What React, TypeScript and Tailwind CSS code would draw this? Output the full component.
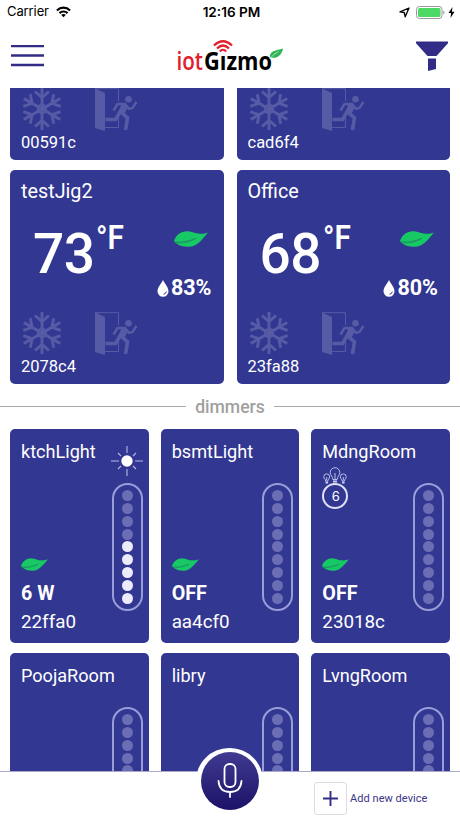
import React from 'react';

interface Thermostat {
  name: string;
  id: string;
  temp: number;
  humidity: number;
}

interface Dimmer {
  name: string;
  id?: string;
  status?: string;
  level: number;
  sun?: boolean;
  bulbs?: number;
}

const thermostats: Thermostat[] = [
  { name: 'testJig2', id: '2078c4', temp: 73, humidity: 83 },
  { name: 'Office', id: '23fa88', temp: 68, humidity: 80 },
];

const dimmers: Dimmer[] = [
  { name: 'ktchLight', id: '22ffa0', status: '6 W', level: 5, sun: true },
  { name: 'bsmtLight', id: 'aa4cf0', status: 'OFF', level: 0 },
  { name: 'MdngRoom', id: '23018c', status: 'OFF', level: 0, bulbs: 6 },
];

const moreDimmers: Dimmer[] = [
  { name: 'PoojaRoom', level: 0 },
  { name: 'libry', level: 0 },
  { name: 'LvngRoom', level: 0 },
];

function Leaf({ className }: { className: string }) {
  return (
    <svg viewBox="0 0 34 16" className={className} fill="none">
      <path d="M0 10C2 4 7 0 14 .3c4 .2 7 2.300 11.500 2.500 3.500.1 6-.3 8.500-1.300C30 6 26.500 11.500 21 14.200c-5.500 2.600-14 1.800-18.500-1.700C1.500 11.700.5 11 0 10z" fill="#17c964" />
      <path d="M.5 10.800c7 .8 14-.5 21-3.300-6 3.700-13 5-19.500 4.300" stroke="#1f7a64" strokeWidth=".6" />
    </svg>
  );
}

function Snowflake() {
  return (
    <svg viewBox="-20 -21 40 42" className="h-[42px] w-10" stroke="#fff" strokeWidth="2.900" fill="none" opacity=".18">
      <path
        d={[0, 60, 120, 180, 240, 300]
          .map((deg) => {
            const a = (deg * Math.PI) / 180;
            const pt = (x: number, y: number) =>
              `${(x * Math.cos(a) - y * Math.sin(a)).toFixed(2)} ${(x * Math.sin(a) + y * Math.cos(a)).toFixed(2)}`;
            return `M0 0L${pt(0, -21)}M${pt(-7, -17.5)}L${pt(0, -11.5)}L${pt(7, -17.5)}`;
          })
          .join('')}
      />
      <path d="M0-5L4.300-2.500V2.500L0 5-4.300 2.500V-2.500z" strokeWidth="1.500" />
    </svg>
  );
}

function ExitDoor() {
  return (
    <svg viewBox="0 0 43 43" className="h-[43px] w-[43px]" fill="none" opacity=".18">
      <path d="M0 .5L10 5V43L0 40z" fill="#fff" />
      <path d="M0 .7H23.500V13M23.500 30V39.500H10" stroke="#fff" strokeWidth="1" />
      <circle cx="33.500" cy="11.300" r="3.300" fill="#fff" />
      <path d="M18.500 22.500L22.500 16H30L34 21 37.500 20 41.500 14" stroke="#fff" strokeWidth="2.400" />
      <path d="M27.500 16.500L32 18.500 28.500 25.500 24 24.500z" fill="#fff" stroke="#fff" strokeWidth="2" />
      <path d="M25 24L20.500 31.500H10.500M26.500 24.500L32.500 30 30.500 42" stroke="#fff" strokeWidth="3.600" />
    </svg>
  );
}

function DeviceFooter({ id }: { id: string }) {
  return (
    <>
      <div className="flex h-[43px] gap-[33px] pl-px">
        <Snowflake />
        <ExitDoor />
      </div>
      <p className="mt-[2px] mb-[7px] text-[16.5px] leading-5">{id}</p>
    </>
  );
}

function ThermostatCard({ name, id, temp, humidity }: Thermostat) {
  return (
    <div className="flex h-[214px] flex-col rounded-[5px] bg-[#323791] px-[11px] pt-[10px] text-white">
      <h3 className="text-[19.8px] leading-6">{name}</h3>
      <div className="mt-[14px] flex h-[70px] items-start pl-3">
        <span className="mt-[3px] w-[63px] text-[55px] leading-[66px] font-medium tracking-[-0.5px]">{temp}</span>
        <span className="origin-left scale-x-[0.9] text-[33px] leading-10 font-semibold">°F</span>
        <Leaf className="mt-[13px] mr-[5px] ml-auto h-4 w-[34px]" />
      </div>
      <div className="-mt-[12px] flex h-6 items-center justify-end pr-px">
        <svg viewBox="0 0 12 17" className="mr-[2px] h-[17px] w-3" fill="none">
          <path d="M6 0C8 4 11.500 7.500 11.500 11.300A5.500 5.500 0 0 1 .5 11.300C.5 7.500 4 4 6 0z" fill="#fff" />
          <path d="M6.500 14.200Q9 14 9.300 11.500" stroke="#323791" />
        </svg>
        <span className="text-[21.5px] leading-6 font-bold">{humidity}%</span>
      </div>
      <div className="mt-auto">
        <DeviceFooter id={id} />
      </div>
    </div>
  );
}

function LevelSlider({ level }: { level: number }) {
  return (
    <div className="flex h-32 w-[31px] shrink-0 flex-col items-center justify-center gap-[1.83px] rounded-full border-2 border-[#9a9ed8]">
      {Array.from({ length: 9 }, (_, i) => (
        <span key={i} className={`size-[11px] shrink-0 rounded-full ${i >= 9 - level ? 'bg-[#ecebfa]' : 'bg-[#6b6eb4]'}`} />
      ))}
    </div>
  );
}

function Sun() {
  return (
    <svg viewBox="-16 -15 32 30" className="absolute -top-[37px] -left-px h-[30px] w-8">
      <path d="M-16 0H-8M8 0H16M0-15V-8M0 8V15M-9-8L-6-5M9-8L6-5M-9 8L-6 5M9 8L6 5" stroke="#b4b8ea" strokeWidth="1.100" />
      <circle r="5.700" fill="#fff" />
    </svg>
  );
}

function BulbGroup({ count }: { count: number }) {
  return (
    <div className="w-[26px]">
      <svg viewBox="0 0 26 17" className="block h-[17px] w-[26px]" fill="none" stroke="#c9ccf2" strokeWidth=".9">
        <path d="M10.800 12.500C10.800 9.500 8.200 8.500 8.200 5.500a4.800 4.800 0 0 1 9.600 0c0 3-2.600 4-2.600 7zM13 12V6" />
        <path d="M3.700 14C3.700 12.300 1.800 12 1.800 9.800a2.900 2.900 0 0 1 5.800 0c0 2.200-1.800 2.500-1.800 4.200zM20.200 14c0-1.700-1.800-2-1.800-4.200a2.900 2.900 0 0 1 5.800 0c0 2.200-1.900 2.500-1.900 4.200zM4.700 13V10M21.300 13V10" />
        <path d="M11 14.500h4M3.500 15.500h2.600M20 15.500h2.600" strokeWidth="2" />
      </svg>
      <div className="-mt-px flex size-[26px] items-center justify-center rounded-full border-2 border-[#dfe1f7] pl-px font-[Inter] text-[13px] leading-none">
        {count}
      </div>
    </div>
  );
}

function DimmerCard({ name, id, status, level, sun, bulbs }: Dimmer) {
  return (
    <div className="h-[214px] rounded-[5px] bg-[#323791] pt-[10px] pr-[6px] pl-[11px] text-white">
      <h3 className="text-[18.1px] leading-[25px]">{name}</h3>
      <div className="flex justify-between">
        <div className="flex h-[179px] flex-col pt-[3px]">
          {bulbs && <BulbGroup count={bulbs} />}
          {id && (
            <div className="mt-auto pb-[9px]">
              <Leaf className="h-[13px] w-[27px]" />
              <p className="mt-[11px] text-[19.7px] leading-6 font-bold">{status}</p>
              <p className="mt-1 text-[18.8px] leading-6">{id}</p>
            </div>
          )}
        </div>
        <div className="relative mt-[18.7px]">
          {sun && <Sun />}
          <LevelSlider level={level} />
        </div>
      </div>
    </div>
  );
}

function StatusBar() {
  return (
    <div className="grid h-6 grid-cols-3 items-center pr-[5px] pl-[7px] font-[Inter] text-black">
      <div className="flex items-center gap-[7px] text-[13px] tracking-[-0.1px]">
        <span>Carrier</span>
        <svg viewBox="0 0 16 12" className="h-3 w-[15px]" fill="none" stroke="#000" strokeWidth="2.300">
          <path d="M1 4.300C5 .4 11 .4 15 4.300M3.700 7.200C6 4.900 10 4.900 12.300 7.200" />
          <path d="M5.500 9C7 7.700 9 7.700 10.500 9L8 11.700z" fill="#000" stroke="none" />
        </svg>
      </div>
      <span className="pl-px text-center text-[13.6px] font-semibold whitespace-nowrap">12:16 PM</span>
      <div className="flex items-center justify-end">
        <svg viewBox="0 0 11 11" className="mr-[6px] size-[11px]" fill="none" stroke="#000" strokeWidth="1.300" strokeLinejoin="round">
          <path d="M10 1L1 4.900 5.200 5.500 6.200 9.800z" />
        </svg>
        <svg viewBox="0 0 29 13" className="mr-[3px] h-[13px] w-[29px]">
          <rect x=".5" y=".5" width="25.500" height="12" rx="3" fill="#fff" stroke="#999" />
          <rect x="2" y="2" width="22.500" height="9" rx="1.500" fill="#4cd964" />
          <path d="M27.300 4.500v4q1.300-.6 1.300-2t-1.300-2z" fill="#999" />
        </svg>
        <svg viewBox="0 0 6 11" className="h-[11px] w-[7px]">
          <path d="M4 0L0 6H2.600L2 11 6 4.700H3.400z" />
        </svg>
      </div>
    </div>
  );
}

function Logo() {
  return (
    <svg viewBox="0 -3 110 42" className="h-[42px] w-[110px]" fontFamily="'Open Sans', sans-serif" fontSize="24.500">
      <text x="1.500" y="31.500" fill="#e0202b" fontWeight="600" textLength="26.500" lengthAdjust="spacingAndGlyphs">iot</text>
      <text x="29" y="31.500" fontWeight="700" textLength="68" lengthAdjust="spacingAndGlyphs">Gızmo</text>
      <g fill="none" stroke="#e0202b" strokeWidth="2.200">
        <path d="M39 7.500Q48-1 57 7.500M42 10.500Q48 4.500 54 10.500M44.800 13.500Q48 10 51.200 13.500" />
      </g>
      <path d="M95 19.500C94 13 101 12.500 108 10.500 107 17 102 21 96 19.500z" fill="#2fb457" />
      <path d="M94.500 21Q99 15.500 103.500 13.500" stroke="#d6f2dd" strokeWidth=".7" fill="none" />
    </svg>
  );
}

function Header() {
  return (
    <header className="flex h-16 items-center justify-between pr-[12px] pl-[11px]">
      <button aria-label="Menu">
        <svg viewBox="0 0 33 22" className="block h-[22px] w-[33px]" stroke="#322c86" strokeWidth="2.500">
          <path d="M0 .9H33M0 10.400H33M0 20H33" />
        </svg>
      </button>
      <Logo />
      <button aria-label="Filter">
        <svg viewBox="0 0 32 30" className="block h-[30px] w-8" fill="#322c86">
          <path d="M0 .5H32V2.300L20.500 15H11.500L0 2.300zM12 17.500H20V28L12 30z" />
        </svg>
      </button>
    </header>
  );
}

function Footer() {
  return (
    <footer className="relative h-[47px] border-t border-[#aaa9c9] bg-white">
      <button className="absolute -top-[24px] left-[196px] flex h-[66px] w-[67px] items-center justify-center rounded-full bg-white" aria-label="Speak">
        <span className="flex size-[58px] items-center justify-center rounded-full bg-linear-to-b from-[#403b91] to-[#1c1168]">
          <svg viewBox="0 0 26 36" className="h-9 w-[26px]" fill="none" stroke="#fff" strokeWidth="1.800" strokeLinecap="round">
            <rect x="7.500" y="1" width="11" height="23" rx="5" />
            <path d="M1.500 18C2 25 6 29 13 29S24 25 24.500 18M13 29V34" />
          </svg>
        </span>
      </button>
      <div className="flex items-center pt-[10px] pl-[314px]">
        <button className="flex size-[33px] items-center justify-center rounded-[3px] border border-[#dcdce2]" aria-label="Add">
          <svg viewBox="0 0 15 15" className="size-[15px]" stroke="#322c86" strokeWidth="1.900">
            <path d="M7.500 0V15M0 7.500H15" />
          </svg>
        </button>
        <span className="mt-px ml-[3px] text-[11px] tracking-[0.05px] text-[#3b3589]">Add new device</span>
      </div>
    </footer>
  );
}

export default function App() {
  return (
    <div className="flex h-[818px] w-[460px] flex-col overflow-hidden bg-white font-[Roboto,sans-serif]">
      <StatusBar />
      <Header />

      <main className="h-[683px] overflow-hidden px-[10px]">
        {/* Tail of the previous row */}
        <div className="grid grid-cols-2 gap-[13px]">
          {['00591c', 'cad6f4'].map((id) => (
            <div key={id} className="flex h-[72px] flex-col justify-end overflow-hidden rounded-b-[5px] bg-[#323791] px-[11px] text-white">
              <DeviceFooter id={id} />
            </div>
          ))}
        </div>

        <div className="mt-[10px] grid grid-cols-2 gap-[13px]">
          {thermostats.map((device) => (
            <ThermostatCard key={device.id} {...device} />
          ))}
        </div>

        <div className="-mx-[10px] flex h-[45.3px] items-center gap-[9px] text-[#a0a0a0]">
          <span className="h-px flex-1 bg-[#a8a8a8]" />
          <span className="text-[17.6px] leading-6 font-medium">dimmers</span>
          <span className="h-px flex-1 bg-[#a8a8a8]" />
        </div>

        <div className="grid grid-cols-3 gap-x-3 gap-y-[10px]">
          {[...dimmers, ...moreDimmers].map((device) => (
            <DimmerCard key={device.name} {...device} />
          ))}
        </div>
      </main>

      <Footer />
    </div>
  );
}
